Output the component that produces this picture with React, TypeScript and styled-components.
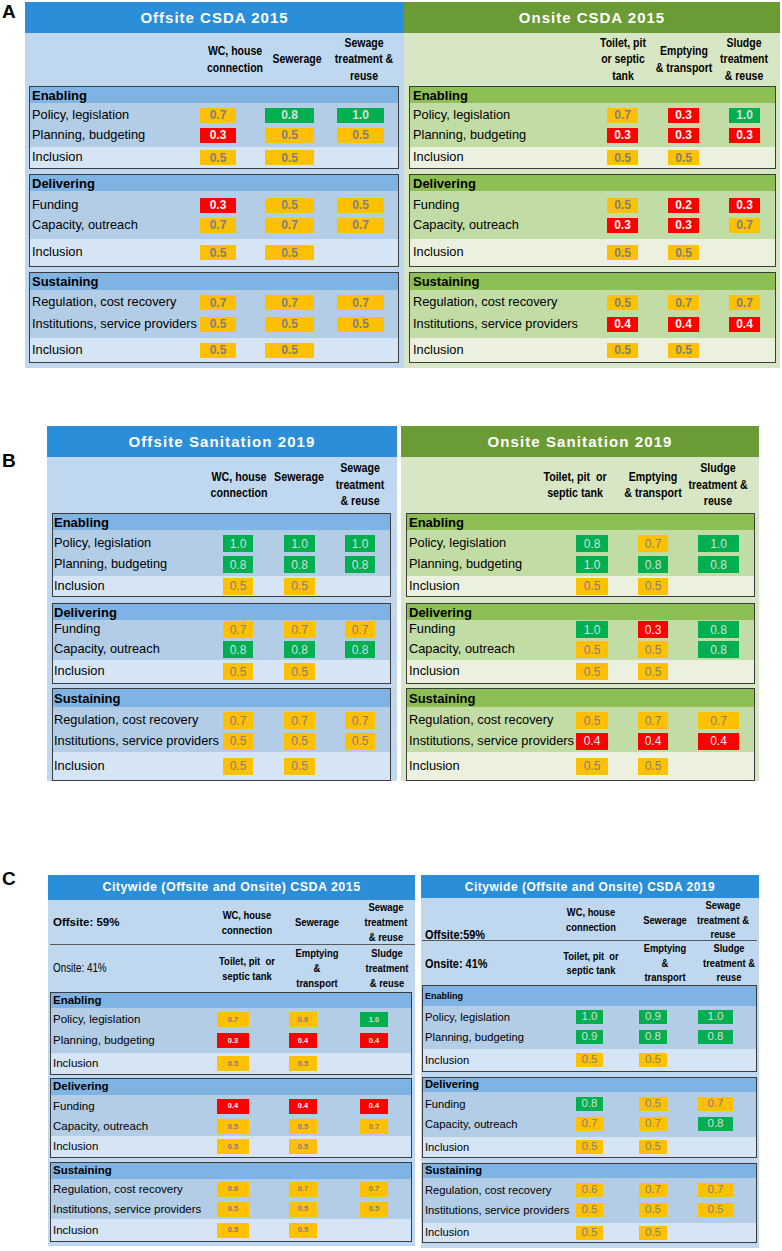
import React from 'react';
import styled, { createGlobalStyle } from 'styled-components';

const GlobalStyle = createGlobalStyle`
  html, body { margin: 0; padding: 0; background: #ffffff; }
  body { font-family: "Liberation Sans", Arial, sans-serif; color: #000; }
`;

const SANS = '"Liberation Sans", Arial, sans-serif';
const NARROW_SCALE = 0.82;

type Tone = 'y' | 'r' | 'g';
type Theme = { title: string; body: string; head: string; rows: string; inc: string };

const BLUE: Theme = { title: '#2b8ed9', body: '#bfd8ef', head: '#7fb3e4', rows: '#b3cde7', inc: '#d5e5f5' };
const GREEN: Theme = { title: '#6b9b34', body: '#d7e6c5', head: '#8dbf55', rows: '#c2dca6', inc: '#ebf1de' };

const TONE_BG: Record<Tone, string> = { y: '#ffc000', r: '#ff0000', g: '#00b050' };
const TONE_FG: Record<Tone, string> = { y: '#7f7f7f', r: '#f4f4f4', g: '#dcdcdc' };

type SideLabel = { text: string; size: number; weight: number; narrow: boolean; end?: boolean };
type HeaderSpec = { h: number; centers: number[]; cols: string[][]; side?: SideLabel };
type Metric = { hdr: number; pt: number; rows: [number, number]; pb: number; inc: number; titleSize?: number };

type PanelSpec = {
  title: string;
  theme: Theme;
  left: number;
  width: number;
  titleH: number;
  titleSize: number;
  titleLs: number;
  headers: HeaderSpec[];
  rule?: [number, number];
  headerSize: number;
  headerLh: number;
  boxLeft: number;
  boxRight: number;
  cells: [number, number][];
  cellH: number;
  valSize: number;
  valWeight: number;
  labelSize: number;
  labelPad: number;
  sectionSize: number;
  values: string[][];
  metrics: Metric[];
  gaps: number[];
  bottom: number;
};

const SECTIONS = [
  { title: 'Enabling', rows: ['Policy, legislation', 'Planning, budgeting'] },
  { title: 'Delivering', rows: ['Funding', 'Capacity, outreach'] },
  { title: 'Sustaining', rows: ['Regulation, cost recovery', 'Institutions, service providers'] },
];

const trackTemplate = (start: number, cells: [number, number][]) => {
  const parts: string[] = [];
  let cursor = start;
  cells.forEach(([x, w]) => {
    parts.push(`${x - cursor}px`, `${w}px`);
    cursor = x + w;
  });
  parts.push('1fr');
  return parts.join(' ');
};

const HEADER_W = 40;

/* ---------- styled parts ---------- */

const Page = styled.div`
  width: 782px;
  padding-top: 2px;
`;

const FigureRow = styled.div<{ $mt: number }>`
  display: flex;
  align-items: flex-start;
  margin-top: ${(p) => p.$mt}px;
`;

const Letter = styled.div<{ $w: number; $mt: number }>`
  flex: none;
  box-sizing: border-box;
  width: ${(p) => p.$w}px;
  margin-top: ${(p) => p.$mt}px;
  padding-left: 2px;
  font: 700 19px/19px ${SANS};
  color: #000;
`;

const Panels = styled.div<{ $mt: number; $gap: number }>`
  display: flex;
  align-items: flex-start;
  gap: ${(p) => p.$gap}px;
  margin-top: ${(p) => p.$mt}px;
`;

const PanelBox = styled.div<{ $w: number; $bg: string; $pb: number }>`
  flex: none;
  width: ${(p) => p.$w}px;
  background: ${(p) => p.$bg};
  padding-bottom: ${(p) => p.$pb}px;
`;

const TitleBar = styled.div<{ $h: number; $bg: string; $size: number; $ls: number }>`
  height: ${(p) => p.$h}px;
  background: ${(p) => p.$bg};
  display: flex;
  align-items: center;
  justify-content: center;
  color: #ffffff;
  font: 700 ${(p) => p.$size}px/1 ${SANS};
  letter-spacing: ${(p) => p.$ls}px;
  white-space: nowrap;
`;

const HeaderRow = styled.div<{ $h: number; $tpl: string }>`
  height: ${(p) => p.$h}px;
  display: grid;
  grid-template-columns: ${(p) => p.$tpl};
  align-items: center;
`;

const Side = styled.div<{ $pad: number; $size: number; $weight: number; $end?: boolean }>`
  grid-column: 1;
  align-self: ${(p) => (p.$end ? 'end' : 'center')};
  padding-left: ${(p) => p.$pad}px;
  white-space: nowrap;
  font-family: ${SANS};
  font-size: ${(p) => p.$size}px;
  font-weight: ${(p) => p.$weight};
  line-height: 15px;
`;

const NarrowText = styled.span<{ $narrow: boolean }>`
  display: inline-block;
  transform: scaleX(${(p) => (p.$narrow ? NARROW_SCALE : 1)});
  transform-origin: left center;
`;

const HeaderCol = styled.div<{ $col: number; $size: number; $lh: number }>`
  grid-column: ${(p) => p.$col};
  display: flex;
  flex-direction: column;
  align-items: center;
  font-family: ${SANS};
  font-weight: 700;
  font-size: ${(p) => p.$size}px;
  line-height: ${(p) => p.$lh}px;
  white-space: pre;
  text-align: center;
  transform: scaleX(${NARROW_SCALE});
`;

const Rule = styled.div<{ $ml: number; $mr: number }>`
  height: 1px;
  margin: 0 ${(p) => p.$mr}px 0 ${(p) => p.$ml}px;
  background: #5a5a5a;
`;

const Box = styled.section<{ $ml: number; $mr: number; $mt: number }>`
  margin: ${(p) => p.$mt}px ${(p) => p.$mr}px 0 ${(p) => p.$ml}px;
  border: 1px solid #3c3c3c;
`;

const SectionHead = styled.div<{ $h: number; $bg: string; $size: number; $pad: number }>`
  height: ${(p) => p.$h}px;
  background: ${(p) => p.$bg};
  display: flex;
  align-items: center;
  padding-left: ${(p) => p.$pad}px;
  font: 700 ${(p) => p.$size}px/1 ${SANS};
`;

const RowsArea = styled.div<{ $bg: string; $pt: number; $pb: number }>`
  background: ${(p) => p.$bg};
  padding: ${(p) => p.$pt}px 0 ${(p) => p.$pb}px;
`;

const DataRow = styled.div<{ $h: number; $tpl: string; $bg?: string }>`
  height: ${(p) => p.$h}px;
  display: grid;
  grid-template-columns: ${(p) => p.$tpl};
  align-items: center;
  background: ${(p) => p.$bg ?? 'transparent'};
`;

const Label = styled.div<{ $size: number; $pad: number }>`
  grid-column: 1;
  padding-left: ${(p) => p.$pad}px;
  white-space: nowrap;
  font: 400 ${(p) => p.$size}px/1.1 ${SANS};
`;

const Cell = styled.div<{ $col: number; $tone: Tone; $h: number; $size: number; $weight: number }>`
  grid-column: ${(p) => p.$col};
  height: ${(p) => p.$h}px;
  background: ${(p) => TONE_BG[p.$tone]};
  color: ${(p) => TONE_FG[p.$tone]};
  display: flex;
  align-items: center;
  justify-content: center;
  font: ${(p) => p.$weight} ${(p) => p.$size}px/1 ${SANS};
`;

/* ---------- components ---------- */

const Values: React.FC<{ spec: PanelSpec; data: string }> = ({ spec, data }) => (
  <>
    {data.split(' ').map((t, i) => (
      <Cell
        key={i}
        $col={2 + i * 2}
        $tone={t.slice(-1) as Tone}
        $h={spec.cellH}
        $size={spec.valSize}
        $weight={spec.valWeight}
      >
        {t.slice(0, -1)}
      </Cell>
    ))}
  </>
);

const Panel: React.FC<{ spec: PanelSpec }> = ({ spec }) => {
  const inner = spec.boxLeft + 1;
  const rowTpl = trackTemplate(inner, spec.cells);
  const { theme } = spec;
  return (
    <PanelBox $w={spec.width} $bg={theme.body} $pb={spec.bottom}>
      <TitleBar $h={spec.titleH} $bg={theme.title} $size={spec.titleSize} $ls={spec.titleLs}>
        {spec.title}
      </TitleBar>
      {spec.headers.map((h, hi) => (
        <React.Fragment key={hi}>
          {hi > 0 && spec.rule && <Rule $ml={spec.rule[0]} $mr={spec.rule[1]} />}
          <HeaderRow
            $h={h.h}
            $tpl={trackTemplate(
              spec.left,
              h.centers.map((c) => [c - HEADER_W / 2, HEADER_W] as [number, number])
            )}
          >
            {h.side && (
              <Side
                $pad={spec.boxLeft - spec.left + 3}
                $size={h.side.size}
                $weight={h.side.weight}
                $end={h.side.end}
              >
                <NarrowText $narrow={h.side.narrow}>{h.side.text}</NarrowText>
              </Side>
            )}
            {h.cols.map((lines, ci) => (
              <HeaderCol key={ci} $col={2 + ci * 2} $size={spec.headerSize} $lh={spec.headerLh}>
                {lines.map((l, li) => (
                  <span key={li}>{l}</span>
                ))}
              </HeaderCol>
            ))}
          </HeaderRow>
        </React.Fragment>
      ))}
      {SECTIONS.map((sec, si) => {
        const m = spec.metrics[si];
        const vals = spec.values[si];
        return (
          <Box
            key={sec.title}
            $ml={spec.boxLeft - spec.left}
            $mr={spec.left + spec.width - spec.boxRight}
            $mt={spec.gaps[si]}
          >
            <SectionHead
              $h={m.hdr}
              $bg={theme.head}
              $size={m.titleSize ?? spec.sectionSize}
              $pad={spec.labelPad}
            >
              {sec.title}
            </SectionHead>
            <RowsArea $bg={theme.rows} $pt={m.pt} $pb={m.pb}>
              {sec.rows.map((label, ri) => (
                <DataRow key={label} $h={m.rows[ri]} $tpl={rowTpl}>
                  <Label $size={spec.labelSize} $pad={spec.labelPad}>
                    {label}
                  </Label>
                  <Values spec={spec} data={vals[ri]} />
                </DataRow>
              ))}
            </RowsArea>
            <DataRow $h={m.inc} $tpl={rowTpl} $bg={theme.inc}>
              <Label $size={spec.labelSize} $pad={spec.labelPad}>
                Inclusion
              </Label>
              <Values spec={spec} data={vals[2]} />
            </DataRow>
          </Box>
        );
      })}
    </PanelBox>
  );
};

/* ---------- data ---------- */

const A_METRICS: Metric[] = [
  { hdr: 16, pt: 2, rows: [20, 20], pb: 2, inc: 21 },
  { hdr: 16, pt: 4, rows: [20, 20], pb: 4, inc: 27 },
  { hdr: 17, pt: 2, rows: [21, 22], pb: 3, inc: 24 },
];

const B_METRICS: Metric[] = [
  { hdr: 16, pt: 3, rows: [21, 21], pb: 1, inc: 20 },
  { hdr: 16, pt: 0, rows: [19, 21], pb: 0, inc: 23 },
  { hdr: 18, pt: 3, rows: [21, 20], pb: 1, inc: 28 },
];

const OFF_COLS = [['WC, house', 'connection'], ['Sewerage'], ['Sewage', 'treatment &', 'reuse']];

const A_LEFT: PanelSpec = {
  title: 'Offsite CSDA 2015',
  theme: BLUE,
  left: 25,
  width: 379,
  titleH: 31,
  titleSize: 15,
  titleLs: 1,
  headers: [{ h: 53, centers: [235, 297, 364], cols: OFF_COLS }],
  headerSize: 12.8,
  headerLh: 16.5,
  boxLeft: 29,
  boxRight: 399,
  cells: [[200, 36], [265, 49], [337, 47]],
  cellH: 15,
  valSize: 12,
  valWeight: 700,
  labelSize: 12.8,
  labelPad: 2,
  sectionSize: 13,
  values: [
    ['0.7y 0.8g 1.0g', '0.3r 0.5y 0.5y', '0.5y 0.5y'],
    ['0.3r 0.5y 0.5y', '0.7y 0.7y 0.7y', '0.5y 0.5y'],
    ['0.7y 0.7y 0.7y', '0.5y 0.5y 0.5y', '0.5y 0.5y'],
  ],
  metrics: A_METRICS,
  gaps: [0, 5, 5],
  bottom: 5,
};

const A_RIGHT: PanelSpec = {
  ...A_LEFT,
  title: 'Onsite CSDA 2015',
  theme: GREEN,
  left: 404,
  width: 376,
  headers: [
    {
      h: 53,
      centers: [623, 684, 744],
      cols: [['Toilet, pit', 'or septic', 'tank'], ['Emptying', '& transport'], ['Sludge', 'treatment', '& reuse']],
    },
  ],
  boxLeft: 409,
  boxRight: 776,
  cells: [[607, 31], [668, 31], [729, 31]],
  labelPad: 3,
  values: [
    ['0.7y 0.3r 1.0g', '0.3r 0.3r 0.3r', '0.5y 0.5y'],
    ['0.5y 0.2r 0.3r', '0.3r 0.3r 0.7y', '0.5y 0.5y'],
    ['0.5y 0.7y 0.7y', '0.4r 0.4r 0.4r', '0.5y 0.5y'],
  ],
};

const B_LEFT: PanelSpec = {
  title: 'Offsite Sanitation 2019',
  theme: BLUE,
  left: 47,
  width: 350,
  titleH: 31,
  titleSize: 15,
  titleLs: 1.1,
  headers: [
    {
      h: 56,
      centers: [239, 299, 360],
      cols: [['WC, house', 'connection'], ['Sewerage', '\u00a0'], ['Sewage', 'treatment', '& reuse']],
    },
  ],
  headerSize: 13,
  headerLh: 16.5,
  boxLeft: 52,
  boxRight: 391,
  cells: [[223, 30], [284, 31], [345, 30]],
  cellH: 17,
  valSize: 12,
  valWeight: 400,
  labelSize: 12.8,
  labelPad: 1,
  sectionSize: 13,
  values: [
    ['1.0g 1.0g 1.0g', '0.8g 0.8g 0.8g', '0.5y 0.5y'],
    ['0.7y 0.7y 0.7y', '0.8g 0.8g 0.8g', '0.5y 0.5y'],
    ['0.7y 0.7y 0.7y', '0.5y 0.5y 0.5y', '0.5y 0.5y'],
  ],
  metrics: B_METRICS,
  gaps: [0, 6, 4],
  bottom: 0,
};

const B_RIGHT: PanelSpec = {
  ...B_LEFT,
  title: 'Onsite Sanitation 2019',
  theme: GREEN,
  left: 401,
  width: 358,
  headers: [
    {
      h: 56,
      centers: [575, 653, 718],
      cols: [['Toilet, pit  or', 'septic tank'], ['Emptying', '& transport'], ['Sludge', 'treatment &', 'reuse']],
    },
  ],
  boxLeft: 406,
  boxRight: 755,
  cells: [[576, 32], [638, 30], [698, 41]],
  labelPad: 2,
  values: [
    ['0.8g 0.7y 1.0g', '1.0g 0.8g 0.8g', '0.5y 0.5y'],
    ['1.0g 0.3r 0.8g', '0.5y 0.5y 0.8g', '0.5y 0.5y'],
    ['0.5y 0.7y 0.7y', '0.4r 0.4r 0.4r', '0.5y 0.5y'],
  ],
};

const C_LEFT: PanelSpec = {
  title: 'Citywide (Offsite and Onsite) CSDA 2015',
  theme: BLUE,
  left: 48,
  width: 367,
  titleH: 25,
  titleSize: 12.5,
  titleLs: 0.45,
  headers: [
    {
      h: 44,
      centers: [247, 317, 386],
      cols: [['WC, house', 'connection'], ['Sewerage'], ['Sewage', 'treatment', '& reuse']],
      side: { text: 'Offsite: 59%', size: 11.5, weight: 700, narrow: false },
    },
    {
      h: 47,
      centers: [247, 317, 387],
      cols: [['Toilet, pit  or', 'septic tank'], ['Emptying', '&', 'transport'], ['Sludge', 'treatment', '& reuse']],
      side: { text: 'Onsite: 41%', size: 12, weight: 400, narrow: true },
    },
  ],
  rule: [2, 0],
  headerSize: 11.5,
  headerLh: 15,
  boxLeft: 50,
  boxRight: 412,
  cells: [[217, 32], [289, 28], [360, 28]],
  cellH: 15,
  valSize: 7.5,
  valWeight: 700,
  labelSize: 11.5,
  labelPad: 2,
  sectionSize: 11.5,
  values: [
    ['0.7y 0.6y 1.0g', '0.3r 0.4r 0.4r', '0.5y 0.5y'],
    ['0.4r 0.4r 0.4r', '0.5y 0.5y 0.7y', '0.5y 0.5y'],
    ['0.6y 0.7y 0.7y', '0.5y 0.5y 0.5y', '0.5y 0.5y'],
  ],
  metrics: [
    { hdr: 15, pt: 1, rows: [21, 21], pb: 2, inc: 21 },
    { hdr: 16, pt: 0, rows: [22, 19], pb: 0, inc: 21 },
    { hdr: 16, pt: 0, rows: [20, 20], pb: 0, inc: 22 },
  ],
  gaps: [0, 3, 4],
  bottom: 4,
};

const C_RIGHT: PanelSpec = {
  title: 'Citywide (Offsite and Onsite) CSDA 2019',
  theme: BLUE,
  left: 421,
  width: 338,
  titleH: 23,
  titleSize: 12,
  titleLs: 0.5,
  headers: [
    {
      h: 42,
      centers: [591, 665, 723],
      cols: [['WC, house', 'connection'], ['Sewerage'], ['Sewage', 'treatment &', 'reuse']],
      side: { text: 'Offsite:59%', size: 13.3, weight: 700, narrow: true, end: true },
    },
    {
      h: 44,
      centers: [591, 665, 729],
      cols: [['Toilet, pit  or', 'septic tank'], ['Emptying', '&', 'transport'], ['Sludge', 'treatment &', 'reuse']],
      side: { text: 'Onsite: 41%', size: 13.3, weight: 700, narrow: true },
    },
  ],
  rule: [1, 2],
  headerSize: 11.4,
  headerLh: 14.5,
  boxLeft: 422,
  boxRight: 757,
  cells: [[576, 27], [639, 28], [698, 35]],
  cellH: 14,
  valSize: 11.5,
  valWeight: 400,
  labelSize: 11.2,
  labelPad: 2,
  sectionSize: 11.2,
  values: [
    ['1.0g 0.9g 1.0g', '0.9g 0.8g 0.8g', '0.5y 0.5y'],
    ['0.8g 0.5y 0.7y', '0.7y 0.7y 0.8g', '0.5y 0.5y'],
    ['0.6y 0.7y 0.7y', '0.5y 0.5y 0.5y', '0.5y 0.5y'],
  ],
  metrics: [
    { hdr: 20, pt: 1, rows: [20, 20], pb: 2, inc: 22, titleSize: 9 },
    { hdr: 14, pt: 2, rows: [20, 20], pb: 3, inc: 20 },
    { hdr: 14, pt: 2, rows: [20, 20], pb: 3, inc: 19 },
  ],
  gaps: [0, 5, 5],
  bottom: 5,
};

export default function App() {
  return (
    <>
      <GlobalStyle />
      <Page>
        <FigureRow $mt={0}>
          <Letter $w={25} $mt={0}>A</Letter>
          <Panels $mt={0} $gap={0}>
            <Panel spec={A_LEFT} />
            <Panel spec={A_RIGHT} />
          </Panels>
        </FigureRow>
        <FigureRow $mt={58}>
          <Letter $w={47} $mt={24.5}>B</Letter>
          <Panels $mt={0} $gap={4}>
            <Panel spec={B_LEFT} />
            <Panel spec={B_RIGHT} />
          </Panels>
        </FigureRow>
        <FigureRow $mt={88}>
          <Letter $w={48} $mt={0}>C</Letter>
          <Panels $mt={6} $gap={6}>
            <Panel spec={C_LEFT} />
            <Panel spec={C_RIGHT} />
          </Panels>
        </FigureRow>
      </Page>
    </>
  );
}
